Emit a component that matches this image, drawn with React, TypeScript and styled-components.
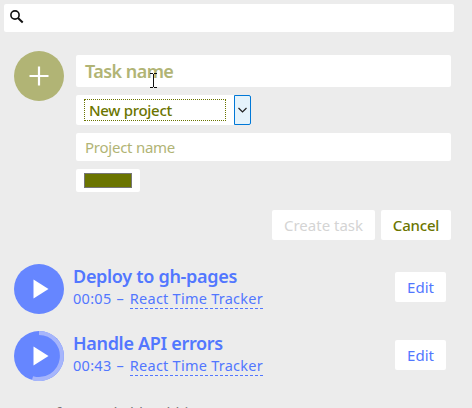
import React from "react";
import styled, { createGlobalStyle } from "styled-components";

const olive = "#6b7500";
const oliveLight = "#b1b475";
const blue = "#5277ff";

const Global = createGlobalStyle`
  * { box-sizing: border-box; }
  html, body { margin: 0; height: 100%; overflow: hidden; background: #ececec; }
  body { font-family: "Noto Sans", "Open Sans", sans-serif; font-size: 15px; }
  button { font-family: inherit; border: 0; padding: 0; }
`;

const Page = styled.main`
  display: flex;
  flex-direction: column;
  height: 408px;
  width: 472px;
  padding: 4px 18px 0 4px;
  overflow: hidden;
`;

const SearchBar = styled.div`
  height: 28px;
  flex: none;
  background: #fff;
  border-radius: 2px;
  padding: 6px;
  svg { display: block; }
`;

const Form = styled.form`
  display: grid;
  grid-template-columns: 50px 375px;
  column-gap: 12px;
  margin: 19px 0 0 10px;
  flex: none;
`;

const Circle = styled.button<{ $color: string }>`
  width: 50px;
  height: 50px;
  flex: none;
  border-radius: 50%;
  background: ${(p) => p.$color};
  svg { display: block; }
`;

const Fields = styled.div`
  display: flex;
  flex-direction: column;
  align-items: flex-start;
  gap: 8px;
  padding-top: 4px;
`;

const Field = styled.div<{ $h: number }>`
  position: relative;
  width: 375px;
  height: ${(p) => p.$h}px;
  display: flex;
  align-items: center;
  padding-left: 9px;
  background: #fff;
  border-radius: 2px;
`;

const Text = styled.span<{ $size: number; $weight?: number; $color: string; $spacing?: number }>`
  font-size: ${(p) => p.$size}px;
  font-weight: ${(p) => p.$weight ?? 400};
  letter-spacing: ${(p) => p.$spacing ?? 0}px;
  color: ${(p) => p.$color};
  line-height: 20px;
  white-space: pre;
`;

const Caret = styled.svg`
  position: absolute;
  left: 73px;
  top: 17px;
`;

const Select = styled.div`
  display: flex;
  justify-content: space-between;
  width: 175px;
  height: 30px;
  background: #fff;
  border-radius: 2px;
  padding-left: 8px;
`;

const SelectValue = styled.div`
  width: 142px;
  height: 22px;
  margin-top: 4px;
  padding-left: 4px;
  border: 1px dotted ${olive};
  display: flex;
  align-items: center;
`;

const SelectArrow = styled.div`
  width: 17px;
  height: 30px;
  display: grid;
  place-items: center;
  background: #e5f3fb;
  border: 1px solid #0078d7;
  border-radius: 0 2px 2px 0;
`;

const ColorInput = styled.div`
  width: 64px;
  height: 23px;
  padding: 4px 8px;
  background: #fff;
  border-radius: 2px;
`;

const Swatch = styled.div`
  height: 15px;
  border: 1px solid #767676;
  background: ${olive};
`;

const Actions = styled.div`
  display: flex;
  justify-content: flex-end;
  gap: 6px;
  margin-top: 18px;
  padding-right: 3px;
  flex: none;
`;

const Button = styled.button<{ $w: number }>`
  width: ${(p) => p.$w}px;
  height: 30px;
  background: #fff;
  border-radius: 2px;
  display: flex;
  align-items: center;
  justify-content: center;
`;

const Tasks = styled.section`
  display: flex;
  flex-direction: column;
  gap: 17px;
  margin: 24px 8px 0 10px;
  flex: none;
`;

const EditWrap = styled.div`
  padding-top: 8px;
`;

const Task = styled.article`
  display: flex;
  height: 50px;
  & + & ${EditWrap} { padding-top: 9px; }
`;

const Info = styled.div`
  flex: 1;
  display: flex;
  flex-direction: column;
  padding: 2px 0 0 9px;
`;

const Detail = styled.div`
  display: flex;
  margin-top: 2px;
`;

const Project = styled(Text)`
  height: 21px;
  border-bottom: 1px dashed ${blue};
`;

const Footer = styled.div`
  margin: 21px 0 0 6px;
  flex: none;
`;

const PlayIcon = ({ progress }: { progress?: boolean }) => (
  <svg width="50" height="50" viewBox="0 0 50 50">
    {progress && (
      <path d="M25 2A23 23 0 1 1 18.5 47.1" fill="none" stroke="#a6b5fb" strokeWidth="4" />
    )}
    <path d="M19.5 15.5v19l15-9.5z" fill="#fff" />
  </svg>
);

const tasks = [
  { name: "Deploy to gh-pages", time: "00:05", spacing: -0.3 },
  { name: "Handle API errors", time: "00:43", spacing: -0.32, progress: true },
];

export default function App() {
  return (
    <>
      <Global />
      <Page>
        <SearchBar>
          <svg width="14" height="14" viewBox="0 0 14 14" fill="none" stroke="#111">
            <circle cx="5" cy="5" r="4.1" strokeWidth="1.6" />
            <path d="M8 8l4.7 4.5" strokeWidth="2" />
          </svg>
        </SearchBar>
        <Form>
          <Circle $color={oliveLight} type="button">
            <svg width="50" height="50" viewBox="0 0 50 50" stroke="#fff" strokeWidth="2.2">
              <path d="M25 15.500v19M15.5 25h19" />
            </svg>
          </Circle>
          <Fields>
            <Field $h={32}>
              <Text $size={18} $weight={600} $color={oliveLight} $spacing={-0.55}>Task name</Text>
              <Caret width="9" height="18" viewBox="0 0 9 18" stroke="#111" fill="none">
                <path d="M1 1.5h3M5 1.5h3M4.5 2v13M1 15.500h3M5 15.500h3" />
              </Caret>
            </Field>
            <Select>
              <SelectValue>
                <Text $size={15} $weight={500} $color={olive} $spacing={-0.3}>New project</Text>
              </SelectValue>
              <SelectArrow>
                <svg width="9" height="6" viewBox="0 0 9 6" fill="none" stroke="#222" strokeWidth="1.2">
                  <path d="M.5 1l4 4 4-4" />
                </svg>
              </SelectArrow>
            </Select>
            <Field $h={28}>
              <Text $size={15} $color={oliveLight} $spacing={-0.25}>Project name</Text>
            </Field>
            <ColorInput><Swatch /></ColorInput>
          </Fields>
        </Form>
        <Actions>
          <Button $w={103}><Text $size={15} $color="#d4d4d4">Create task</Text></Button>
          <Button $w={70}><Text $size={15} $weight={500} $color={olive} $spacing={-0.2}>Cancel</Text></Button>
        </Actions>
        <Tasks>
          {tasks.map((t) => (
            <Task key={t.name}>
              <Circle $color="#6686ff"><PlayIcon progress={t.progress} /></Circle>
              <Info>
                <Text $size={18} $weight={600} $color={blue} $spacing={t.spacing}>{t.name}</Text>
                <Detail>
                  <Text $size={14.5} $color={blue} $spacing={0.3}>{t.time}</Text>
                  <Text $size={14.5} $color={blue} $spacing={1.15}> – </Text>
                  <Project $size={14.5} $color={blue} $spacing={0.25}>React Time Tracker</Project>
                </Detail>
              </Info>
              <EditWrap><Button $w={51}><Text $size={15} $color={blue}>Edit</Text></Button></EditWrap>
            </Task>
          ))}
        </Tasks>
        <Footer><Text $size={15} $color="#777" $spacing={-0.15}>Hours for Good old Hobbies</Text></Footer>
      </Page>
    </>
  );
}
